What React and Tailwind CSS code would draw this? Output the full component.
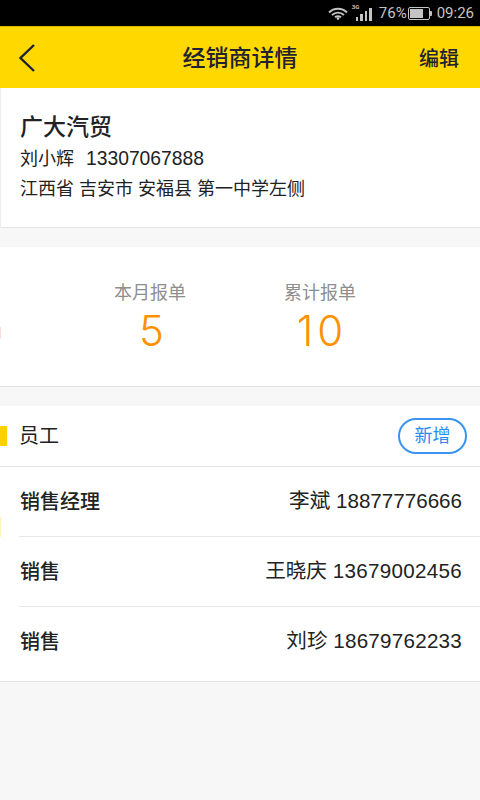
import React from 'react';

const font = { fontFamily: '"Liberation Sans", "Noto Sans CJK SC", sans-serif' };
const statusFont = { fontFamily: '"Roboto", sans-serif' };
const numberFont = { fontFamily: '"Inter", sans-serif' };

const StatusBar = () => (
  <div className="h-[26px] bg-black flex items-center justify-end pr-[6px] text-[#c4c4c4]" style={statusFont}>
    {/* wifi */}
    <svg width="20" height="14" viewBox="0 0 20 14" className="mr-[4px]" fill="none" stroke="#c4c4c4" strokeWidth="1.9">
      <path d="M1 6.5C6 1.5 14 1.5 19 6.5" />
      <path d="M4 9C7.5 5.8 12.5 5.8 16 9" />
      <path d="M7 11.3C9 9.8 11 9.8 13 11.3" />
      <circle cx="10" cy="12.6" r="1.3" fill="#c4c4c4" stroke="none" />
    </svg>
    {/* signal */}
    <div className="relative w-[20px] h-[20px] mr-[7px] flex items-end justify-end gap-[2px] pb-[2px]">
      <span className="absolute left-0 top-[1px] text-[6px] leading-none font-bold text-[#c4c4c4]">3G</span>
      <span className="w-[2.5px] h-[4px] bg-[#c4c4c4]" />
      <span className="w-[2.5px] h-[7px] bg-[#c4c4c4]" />
      <span className="w-[2.5px] h-[10px] bg-[#c4c4c4]" />
      <span className="w-[2.5px] h-[13px] bg-[#c4c4c4]" />
    </div>
    <span className="text-[15px] leading-none mr-[1px]">76%</span>
    {/* battery */}
    <div className="flex items-center mr-[5px]">
      <div className="w-[22px] h-[13px] border-[1.5px] border-[#c4c4c4] rounded-[2px] p-[1px]">
        <div className="w-[76%] h-full bg-[#c4c4c4]" />
      </div>
      <div className="w-[2px] h-[5px] bg-[#c4c4c4] rounded-r-[1px]" />
    </div>
    <span className="text-[15px] leading-none">09:26</span>
  </div>
);

const StatBlock = ({ label, value, nudge }) => (
  <div className="w-[100px] flex flex-col items-center pt-[4px]">
    <span className="text-[18px] leading-[24px] text-[#8e8e8e]">{label}</span>
    <span className={`text-[42px] leading-[52px] font-light text-[#ff9100] ${nudge}`} style={numberFont}>{value}</span>
  </div>
);

const StaffRow = ({ role, name, phone, spacing, last }) =>
  last ? (
    <div className="h-[75px] pb-[5px] pl-[20px] pr-[18px] flex items-center justify-between border-b border-[#e4e4e4]">
      <span className="text-[20px] font-medium text-[#222]">{role}</span>
      <span className="text-[20.6px] text-[#222]">{name} <span className={spacing}>{phone}</span></span>
    </div>
  ) : (
    <div className="pl-[19px]">
      <div className="h-[70px] pl-[1px] pr-[18px] flex items-center justify-between border-b border-[#e8e8e8]">
        <span className="text-[20px] font-medium text-[#222]">{role}</span>
        <span className="text-[20.6px] text-[#222]">{name} <span className={spacing}>{phone}</span></span>
      </div>
    </div>
  );

export default function App() {
  return (
    <div className="relative w-[480px] h-[800px] bg-[#f7f7f7] overflow-hidden" style={font}>
      <StatusBar />

      {/* Header */}
      <div className="h-[62px] bg-[#ffd800] grid grid-cols-3 items-center px-[21px] pt-[2px] border-t border-[#d9b800]">
        <svg width="18" height="30" viewBox="0 0 18 30" fill="none" stroke="#1d2233" strokeWidth="2.4" className="-ml-[3px] -mt-[2px]">
          <path d="M16 2L2.5 15L16 28" />
        </svg>
        <span className="text-[23px] font-medium text-[#1f2230] text-center whitespace-nowrap">经销商详情</span>
        <span className="text-[20px] font-medium text-[#1f2230] text-right">编辑</span>
      </div>

      {/* Dealer info */}
      <div className="h-[140px] bg-white border-b border-[#e4e4e4] pl-[20px] pt-[22px]">
        <div className="text-[23px] leading-[34px] font-medium text-[#222]">广大汽贸</div>
        <div className="text-[18px] leading-[30px] text-[#222] flex items-center gap-[12px]">
          <span>刘小辉</span>
          <span className="text-[19.3px]">13307067888</span>
        </div>
        <div className="text-[18px] leading-[30px] text-[#222]">江西省 吉安市 安福县 第一中学左侧</div>
      </div>

      {/* Stats */}
      <div className="mt-[19px] h-[140px] bg-white border-b border-[#e4e4e4] flex items-center justify-center gap-[70px] pr-[10px]">
        <StatBlock label="本月报单" value="5" nudge="ml-[3px]" />
        <StatBlock label="累计报单" value="10" nudge="ml-[4px] tracking-[4px]" />
      </div>

      {/* Staff */}
      <div className="mt-[19px] bg-white">
        <div className="h-[61px] flex items-center justify-between pr-[13px] border-b border-[#e4e4e4]">
          <div className="flex items-center">
            <div className="w-[7px] h-[20px] bg-[#ffd000]" />
            <span className="ml-[12px] text-[20px] text-[#222]">员工</span>
          </div>
          <button className="w-[69px] h-[36px] rounded-full border-2 border-[#3a94f2] text-[18px] leading-none text-[#2a8cf0]">新增</button>
        </div>
        <StaffRow role="销售经理" name="李斌" phone="18877776666" spacing="" />
        <StaffRow role="销售" name="王晓庆" phone="13679002456" spacing="tracking-[0.3px]" />
        <StaffRow role="销售" name="刘珍" phone="18679762233" spacing="tracking-[0.25px]" last />
      </div>

      {/* Faint marks along the left edge, from the page behind */}
      <div className="absolute left-0 top-[88px] w-px h-[140px] bg-[#eeeeee]" />
      <div className="absolute left-0 top-[327px] w-px h-[12px] bg-[#fbdede]" />
      <div className="absolute left-0 top-[517px] w-px h-[20px] bg-[#fff3c0]" />
    </div>
  );
}
